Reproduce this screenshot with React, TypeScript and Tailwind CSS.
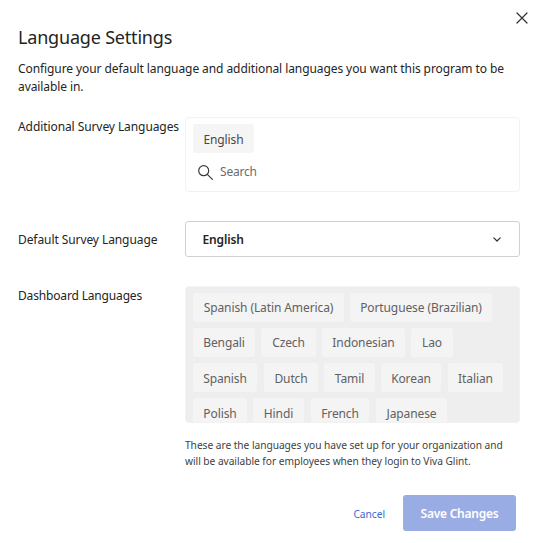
const rows: [string, string][][] = [
  [["Spanish (Latin America)", "w-[151px]"], ["Portuguese (Brazilian)", "w-[142px]"]],
  [["Bengali", "w-[62px]"], ["Czech", "w-[55px]"], ["Indonesian", "w-[83px]"], ["Lao", "w-[42px]"]],
  [["Spanish", "w-[64px] mr-[1px] pt-[2px]"], ["Dutch", "w-[54px] pt-[2px]"], ["Tamil", "w-[51px] pt-[2px]"], ["Korean", "w-[60px] mr-[1px] pt-[2px]"], ["Italian", "w-[55px] pt-[2px]"]],
  [["Polish", "w-[54px] pt-[2px]"], ["Hindi", "w-[51px] mr-[1px] pt-[2px]"], ["French", "w-[58px] mr-[1px] pt-[2px]"], ["Japanese", "w-[71px] pt-[2px]"]],
];

function Chip({ label, className }: { label: string; className: string }) {
  return (
    <span className={`flex h-[29px] shrink-0 items-center justify-center rounded-[3px] text-[12px] tracking-[-0.1px] whitespace-nowrap ${className}`}>
      {label}
    </span>
  );
}

export default function App() {
  return (
    <main className="relative h-[543px] w-[540px] overflow-hidden bg-white px-[18px] pt-[24px] font-['Noto_Sans',sans-serif] text-[12px] tracking-[-0.083px] text-[#242424]">
      <button aria-label="Close" className="absolute top-[12px] left-[516px]">
        <svg width="12" height="12" viewBox="0 0 12 12" fill="none" stroke="#303030" strokeWidth="1.2" strokeLinecap="round">
          <path d="M1 1 11 11M11 1 1 11" />
        </svg>
      </button>
      <h1 className="h-[26px] text-[18px] leading-[26px] tracking-[-0.19px] whitespace-nowrap">Language Settings</h1>
      <p className="mt-[10px] h-[36px] text-[12px] leading-[18px] whitespace-nowrap">
        Configure your default language and additional languages you want this program to be
        <br />
        available in.
      </p>
      <div className="mt-[21px] flex h-[75px]">
        <label className="w-[167px] shrink-0 pt-[1px] leading-[18px] whitespace-nowrap">Additional Survey Languages</label>
        <div className="w-[335px] rounded-[4px] border border-[#f2f2f2] px-[7px] pt-[6px]">
          <Chip label="English" className="w-[61px] bg-[#f5f5f5] pt-[2px] text-[#484848]" />
          <div className="mt-[9px] flex h-[20px] items-center pl-[5px] text-[#6b6b6b]">
            <svg width="15" height="15" viewBox="0 0 15 15" fill="none" stroke="#3a3a3a" strokeWidth="1.2" strokeLinecap="round">
              <circle cx="5.7" cy="5.7" r="5" />
              <path d="m9.3 9.3 5.1 5.1" />
            </svg>
            <span className="ml-[7px] tracking-[-0.2px]">Search</span>
          </div>
        </div>
      </div>
      <div className="mt-[29px] flex h-[36px] items-center">
        <label className="w-[167px] shrink-0 pt-[2px] whitespace-nowrap">Default Survey Language</label>
        <div className="flex h-[36px] w-[335px] items-center justify-between rounded-[3px] border border-[#d1d1d1] pr-[18px] pl-[16.5px] font-semibold">
          <span className="pt-[1px] tracking-[-0.15px]">English</span>
          <svg width="8" height="5" viewBox="0 0 8 5" fill="none" stroke="#303030" strokeWidth="1.2" strokeLinecap="round" strokeLinejoin="round" className="mt-[1px]">
            <path d="m.8.8 3.2 3.2L7.2.8" />
          </svg>
        </div>
      </div>
      <div className="mt-[29px] flex h-[137px]">
        <label className="w-[167px] shrink-0 pt-[1px] leading-[18px] tracking-[-0.16px] whitespace-nowrap">Dashboard Languages</label>
        <div className="flex w-[335px] flex-col gap-[6px] overflow-hidden rounded-[4px] border border-[#f2f2f2] bg-[#eeeeee] px-[7px] pt-[6px]">
          {rows.map((row, i) => (
            <div key={i} className="flex shrink-0 gap-[6px]">
              {row.map(([label, width]) => (
                <Chip key={label} label={label} className={`bg-[#f4f4f4] text-[#616161] ${width}`} />
              ))}
            </div>
          ))}
        </div>
      </div>
      <p className="mt-[14px] ml-[167px] h-[32px] text-[10.2px] leading-[16px] tracking-[-0.04px] whitespace-nowrap text-[#424242]">
        These are the languages you have set up for your organization and
        <br />
        will be available for employees when they login to Viva Glint.
      </p>
      <div className="mt-[26px] mr-[6px] flex items-center justify-end gap-[18px]">
        <button className="pt-[3px] text-[10.3px] text-[#4169d0]">Cancel</button>
        <button className="h-[36px] w-[113px] rounded-[3px] bg-[#9aace4] pt-[2px] text-[12px] font-semibold tracking-[-0.25px] whitespace-nowrap text-white">Save Changes</button>
      </div>
    </main>
  );
}
